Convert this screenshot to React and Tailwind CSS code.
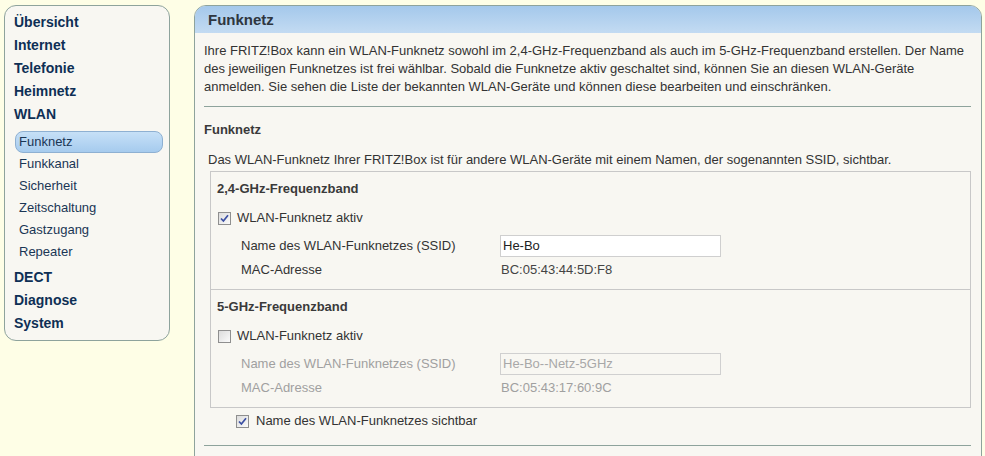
import React from "react";

function Check({ checked }) {
  return (
    <span className="inline-flex w-[13px] h-[13px] border border-[#8f8f8f] bg-gradient-to-br from-[#dcdcdc] to-[#fbfbfb] items-center justify-center shrink-0">
      {checked && (
        <svg width="9" height="9" viewBox="0 0 9 9">
          <path d="M1 4.5 L3.4 7 L8 1.2" fill="none" stroke="#3b4fa3" strokeWidth="1.7" />
        </svg>
      )}
    </span>
  );
}

const Top = ({ children }) => (
  <div className="h-[23px] leading-[23px] pl-[9px] text-[14px] font-bold text-[#0e2f55]">{children}</div>
);
const Sub = ({ children, active }) =>
  active ? (
    <div className="h-[22px] leading-[20px] ml-[10px] mr-[6px] pl-[3px] text-[13px] text-[#1a3655] rounded-[8px] border border-[#8eb0d2] bg-gradient-to-b from-[#c6e0f7] to-[#a6cbee]">
      {children}
    </div>
  ) : (
    <div className="h-[22px] leading-[22px] pl-[14px] text-[13px] text-[#1a3655]">{children}</div>
  );

function Band({ title, active, ssid, mac, border }) {
  const muted = !active;
  return (
    <div className={`px-[6px] pt-[8px] pb-[10px] ${border ? "border-t border-[#c8c8c8]" : ""}`}>
      <div className="h-[18px] leading-[18px] text-[13px] font-bold text-[#3a3a3a]">{title}</div>
      <div className="mt-[11px] h-[18px] flex items-center pl-[1px] gap-[6px] text-[13px] text-[#333]">
        <Check checked={active} />
        <span>WLAN-Funknetz aktiv</span>
      </div>
      <div className={`mt-[8px] h-[22px] flex items-center pl-[24px] text-[13px] ${muted ? "text-[#a0a0a0]" : "text-[#333]"}`}>
        <span className="w-[259px]">Name des WLAN-Funknetzes (SSID)</span>
        <div className={`w-[221px] h-[22px] leading-[20px] border ${muted ? "border-[#d0d0d0] text-[#a8a8a8] bg-[#f8f7f2]" : "border-[#cfcfcf] text-[#222] bg-white"} px-[2px] text-[13px]`}>
          {ssid}
        </div>
      </div>
      <div className={`mt-[4px] h-[18px] leading-[18px] flex pl-[24px] text-[13px] ${muted ? "text-[#a0a0a0]" : "text-[#333]"}`}>
        <span className="w-[260px]">MAC-Adresse</span>
        <span className={muted ? "text-[#a0a0a0]" : "text-[#444]"}>{mac}</span>
      </div>
    </div>
  );
}

export default function App() {
  return (
    <div className="w-[985px] h-[456px] overflow-hidden bg-[#fefee6] flex items-start gap-[24px] pl-[4px] pt-[5px]" style={{ fontFamily: '"Liberation Sans", Arial, sans-serif' }}>
      <div className="w-[166px] h-[336px] rounded-[12px] border border-[#8ea39c] bg-[#f8f7f2] pt-[5px] shrink-0">
        <Top>Übersicht</Top>
        <Top>Internet</Top>
        <Top>Telefonie</Top>
        <Top>Heimnetz</Top>
        <Top>WLAN</Top>
        <div className="mt-[5px]">
          <Sub active>Funknetz</Sub>
          <Sub>Funkkanal</Sub>
          <Sub>Sicherheit</Sub>
          <Sub>Zeitschaltung</Sub>
          <Sub>Gastzugang</Sub>
          <Sub>Repeater</Sub>
        </div>
        <div className="mt-[3px]">
          <Top>DECT</Top>
          <Top>Diagnose</Top>
          <Top>System</Top>
        </div>
      </div>

      <div className="w-[788px] h-[470px] rounded-t-[12px] border border-[#8ea39c] bg-[#f8f7f2] overflow-hidden shrink-0">
        <div className="h-[27px] leading-[27px] pl-[13px] bg-gradient-to-b from-[#a4c8eb] to-[#c3dbf2] text-[15px] font-bold text-[#2e3640]">
          Funknetz
        </div>
        <div className="px-[9px]">
          <p className="pt-[9px] text-[13px] leading-[18px] text-[#333] whitespace-nowrap">
            Ihre FRITZ!Box kann ein WLAN-Funknetz sowohl im 2,4-GHz-Frequenzband als auch im 5-GHz-Frequenzband erstellen. Der Name
            <br />
            des jeweiligen Funknetzes ist frei wählbar. Sobald die Funknetze aktiv geschaltet sind, können Sie an diesen WLAN-Geräte
            <br />
            anmelden. Sie sehen die Liste der bekannten WLAN-Geräte und können diese bearbeiten und einschränken.
          </p>
          <div className="mt-[10px] h-px bg-[#8ea39c] mr-[1px]" />
          <div className="mt-[14px] h-[18px] leading-[18px] text-[13px] font-bold text-[#3a3a3a]">Funknetz</div>
          <div className="mt-[12px] h-[18px] leading-[18px] pl-[4px] text-[13px] text-[#333]">
            Das WLAN-Funknetz Ihrer FRITZ!Box ist für andere WLAN-Geräte mit einem Namen, der sogenannten SSID, sichtbar.
          </div>
          <div className="mt-[2px] ml-[6px] mr-[1px] border border-[#c8c8c8]">
            <Band title="2,4-GHz-Frequenzband" active ssid="He-Bo" mac="BC:05:43:44:5D:F8" />
            <Band title="5-GHz-Frequenzband" active={false} ssid="He-Bo--Netz-5GHz" mac="BC:05:43:17:60:9C" border />
          </div>
          <div className="mt-[4px] h-[18px] flex items-center pl-[32px] gap-[7px] text-[13px] text-[#333]">
            <Check checked />
            <span>Name des WLAN-Funknetzes sichtbar</span>
          </div>
          <div className="mt-[15px] h-px bg-[#8ea39c] mr-[1px]" />
        </div>
      </div>
    </div>
  );
}
